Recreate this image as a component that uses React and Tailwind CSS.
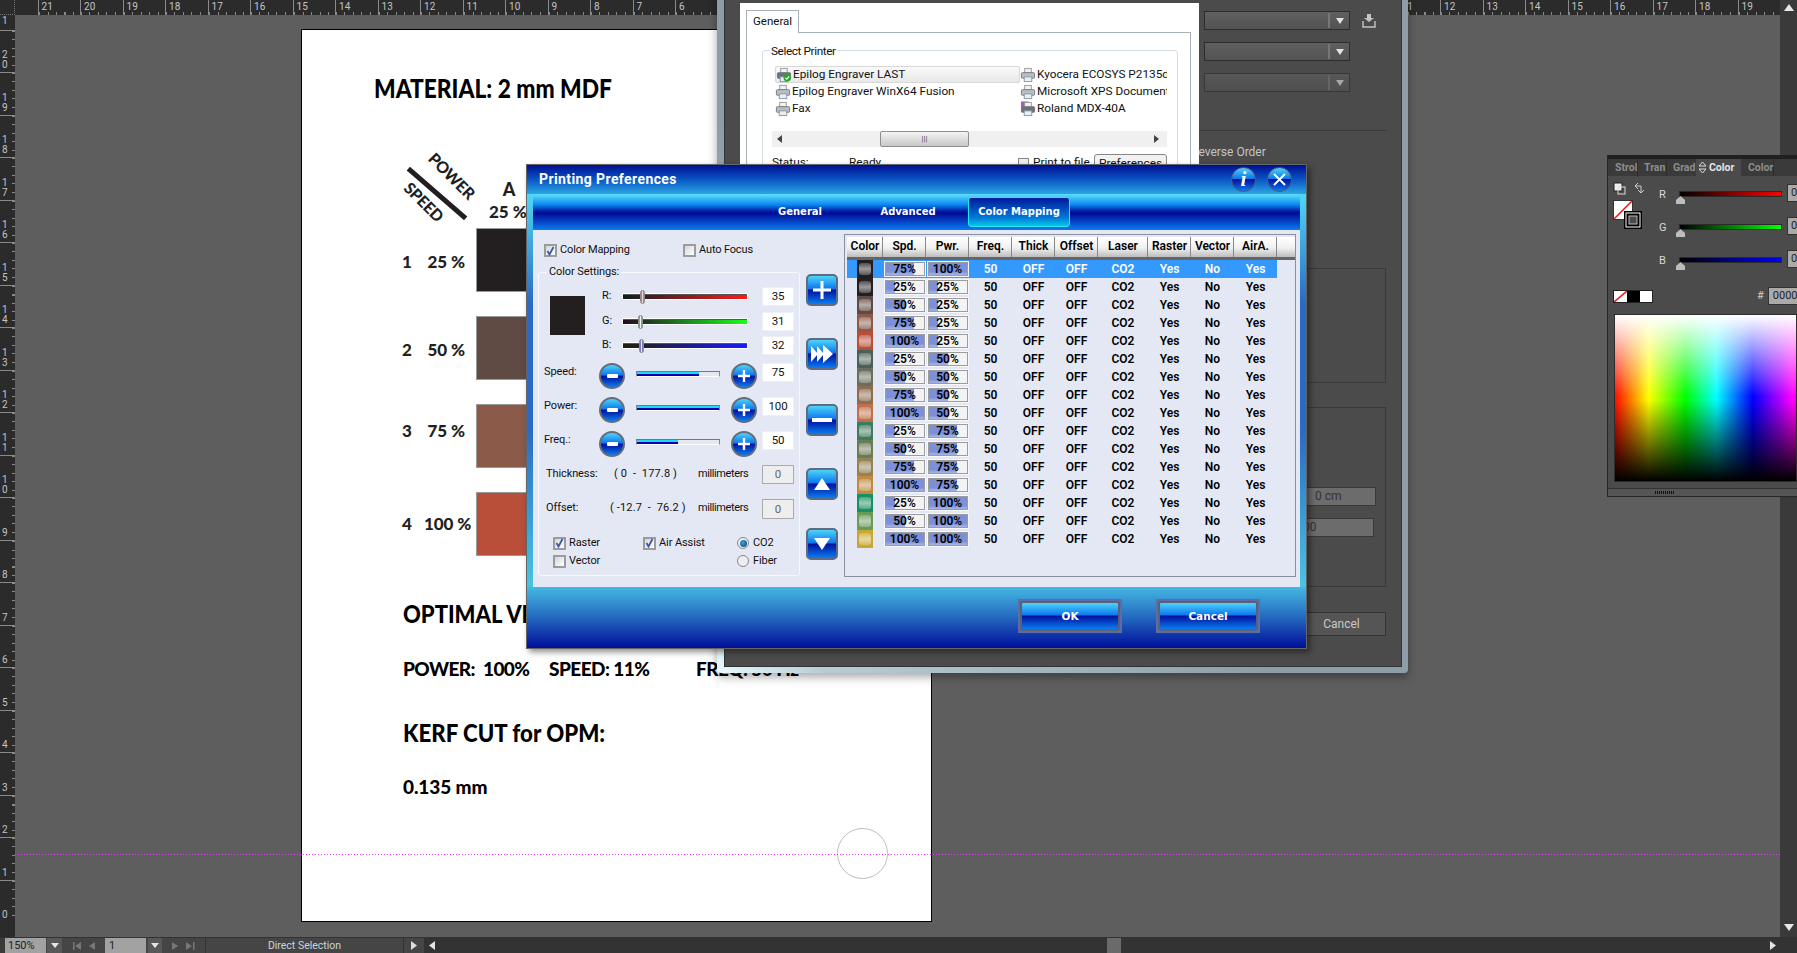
import React from "react";

const GLASS = "bg-[linear-gradient(180deg,#4fd2f8_0%,#0a78ee_46%,#00109c_50%,#0a7cf2_100%)]";
const TOPNUMS = [21,20,19,18,17,16,15,14,13,12,11,10,9,8,7,6,5,4,3,2,1,0,1,2,3,4,5,6,7,8,9,10,11,12,13,14,15,16,17,18,19];
const LEFTNUMS = [20,19,18,17,16,15,14,13,12,11,10,9,8,7,6,5,4,3,2,1,0];
const WIDTHS = ["w-[36px]","w-[43px]","w-[43px]","w-[43px]","w-[43px]","w-[43px]","w-[50px]","w-[43px]","w-[43px]","w-[43px]"];
const HEAD = ["Color","Spd.","Pwr.","Freq.","Thick","Offset","Laser","Raster","Vector","AirA."];
const ROWS = [
  ["#231f20",75,100],["#231f20",25,25],["#5f4b44",50,25],["#8b5a48",75,25],["#b94f38",100,25],
  ["#4a5f58",25,50],["#6a6e5e",50,50],["#8e6d50",75,50],["#c0704a",100,50],
  ["#3f7a5e",25,75],["#6b7b55",50,75],["#958353",75,75],["#c08a40",100,75],
  ["#1a9060",25,100],["#6a9a58",50,100],["#c8a830",100,100],
];

function TopRuler() {
  return (
    <div className="h-[15px] flex bg-[#2b2b2b] shrink-0 overflow-hidden">
      <div className="w-[15px] shrink-0 border-r border-b border-dotted border-[#777]" />
      <div className="w-[22.6px] shrink-0" />
      {TOPNUMS.map((n, i) => (
        <div key={i} className="w-[42.5px] shrink-0 h-[15px] border-l border-[#8a8a8a] pl-[3px] text-[10px] leading-[13px] text-[#c4c4c4] bg-[repeating-linear-gradient(90deg,#8a8a8a_0_1px,transparent_1px_8.5px)] bg-size-[100%_3px] bg-no-repeat bg-bottom">{n}</div>
      ))}
      <div className="w-[17px] shrink-0 bg-[#3a3a3a] flex justify-center items-center ml-auto">
        <svg width="10" height="7"><path d="M5 0L10 7H0z" fill="#e8e8e8" /></svg>
      </div>
    </div>
  );
}

function LeftRuler() {
  return (
    <div className="w-[15px] bg-[#2b2b2b] flex flex-col shrink-0 overflow-hidden text-[10px] leading-[10px] text-[#c4c4c4]">
      <div className="h-[14.5px] shrink-0 pl-[2px] leading-[12px]">1</div>
      {LEFTNUMS.map((n, i) => (
        <div key={i} className="h-[42.5px] shrink-0 border-t border-[#8a8a8a] flex flex-col justify-end pb-[2px] pl-[2px] bg-[repeating-linear-gradient(180deg,#8a8a8a_0_1px,transparent_1px_8.5px)] bg-size-[3px_100%] bg-no-repeat bg-right">
          {String(n).split("").map((d, j) => <span key={j}>{d}</span>)}
        </div>
      ))}
    </div>
  );
}

function PageDoc() {
  const big = "font-[Lato,sans-serif] font-black text-black";
  const rowOffset = ["translate-y-[2px]", "translate-y-[2px]", "-translate-y-[5px]", "translate-y-[0px]"];
  return (
    <div className={"absolute left-[286px] top-[14px] w-[631px] h-[893px] bg-white border border-black pl-[72px] " + big}>
      <div className="mt-[44px] h-[28px] text-[26px] leading-[28px] whitespace-nowrap origin-left scale-x-[0.875]">MATERIAL: 2 mm MDF</div>
      <div className="relative h-[126px] ml-[29px] text-[#231f20]">
        <div className="absolute -left-[4px] top-[89px] w-[76px] h-[5px] bg-[#231f20] rotate-[41deg]" />
        <div className="absolute left-[20px] top-[64px] text-[16px] leading-[20px] rotate-[45deg] tracking-[-0.3px]">POWER</div>
        <div className="absolute -left-[3px] top-[90px] text-[16px] leading-[20px] rotate-[45deg] tracking-[-0.3px]">SPEED</div>
        <div className="absolute left-[86px] top-[77px] w-[40px] text-center text-[18px] leading-[20px]">A</div>
        <div className="absolute left-[86px] top-[100px] text-[17px] leading-[20px] whitespace-nowrap">25 %</div>
      </div>
      {[["1","25 %","bg-[#231f20]"],["2","50 %","bg-[#5f4b44]"],["3","75 %","bg-[#8b5a48]"],["4","100 %","bg-[#b94f38]"]].map(([a,b,c],i)=>(
        <div key={i} className="flex items-center h-[64px] mb-[24px] text-[#231f20] text-[17px] tracking-[-0.1px]">
          <span className={"w-[22px] ml-[28px] shrink-0 " + rowOffset[i]}>{a}</span>
          <span className={"w-[51px] shrink-0 text-right pr-[10px] whitespace-nowrap " + rowOffset[i]}>{b}</span>
          <div className={"w-[80px] h-[64px] shrink-0 border border-[#999] ml-[1px] " + c} />
        </div>
      ))}
      <div className="ml-[29px] mt-[43px] h-[28px] text-[25px] leading-[28px] whitespace-nowrap origin-left scale-x-[0.88]">OPTIMAL VECTOR:</div>
      <div className="ml-[29px] mt-[31px] h-[22px] flex text-[19px] leading-[22px] tracking-[-0.55px] whitespace-nowrap">
        <span className="w-[146px]">POWER:&nbsp; 100%</span>
        <span className="w-[147px]">SPEED: 11%</span>
        <span>FREQ: 50 Hz</span>
      </div>
      <div className="ml-[29px] mt-[38px] h-[28px] text-[25px] leading-[28px] whitespace-nowrap origin-left scale-x-[0.89]">KERF CUT for OPM:</div>
      <div className="ml-[29px] mt-[30px] h-[22px] text-[19px] leading-[22px] tracking-[-0.1px]">0.135 mm</div>
      <div className="absolute left-[535px] top-[798px] w-[51px] h-[51px] rounded-full border border-[#bdbdbd]" />
    </div>
  );
}

function Printer({ check, purple }) {
  return (
    <svg width="16" height="16" viewBox="0 0 17 16" className="shrink-0">
      {purple && <rect x="1" y="0" width="8" height="6" fill="#9a60c0" />}
      <rect x="5" y="1" width="7" height="5" fill="#f2f2f2" stroke="#999" />
      <rect x="1.5" y="5.5" width="14" height="6" rx="1" fill={check||purple ? "#6a7278" : "#b8bec2"} stroke="#777" />
      <rect x="4.5" y="10" width="8" height="5" fill="#e8eef2" stroke="#89a" />
      {check && <><circle cx="12" cy="11" r="4" fill="#2da52d" /><path d="M10 11l1.5 1.5L14 9.5" stroke="#fff" strokeWidth="1.2" fill="none" /></>}
    </svg>
  );
}

function Combo({ dim }) {
  return (
    <div className={"h-[19px] w-[146px] ml-[5px] border border-[#2d2d2d] flex justify-end items-center bg-[linear-gradient(180deg,#606060,#525252)] " + (dim ? "opacity-60" : "")}>
      <div className="h-[15px] w-[2px] border-x border-[#777] mr-[6px]" />
      <svg width="8" height="6" className="mr-[5px]"><path d="M0 0H8L4 6z" fill="#e4e4e4" /></svg>
    </div>
  );
}

function PrintWindow() {
  const printers = [
    ["Epilog Engraver LAST", "Kyocera ECOSYS P2135dn"],
    ["Epilog Engraver WinX64 Fusion", "Microsoft XPS Document Writer"],
    ["Fax", "Roland MDX-40A"],
  ];
  return (
    <div className="absolute left-[717px] top-[-10px] w-[691px] h-[683px] pl-[7px] pr-[6px] pb-[6px] rounded-b-[4px] bg-[linear-gradient(45deg,#e8faff_0%,#b8ccd6_8%,#8d9ea8_40%)] shadow-[0_4px_10px_rgba(0,0,0,0.35)]">
      <div className="h-full bg-[#4b4b4b] flex border border-[#333] text-[12px]">
        <div className="relative z-10 w-[459px] h-[500px] ml-[15px] mt-[12px] bg-white shrink-0 pt-[7px] pl-[6px] text-[#111]">
          <div className="w-[53px] h-[23px] border border-b-0 border-[#a9b2ba] bg-white relative z-10 pl-[6px] leading-[20px] text-[11.5px]">General</div>
          <div className="w-[445px] h-[400px] border border-[#a9b2ba] -mt-[1px] pl-[15px] pt-[17px] text-[11.8px]">
            <div className="relative w-[416px] h-[200px] border border-[#d4dce4] rounded-[3px] pl-[12px] pt-[15px]">
              <div className="absolute left-[7px] -top-[7px] bg-white px-[1px] leading-[15px] tracking-[-0.4px]">Select Printer</div>
              <div className="grid grid-cols-[245px_147px]">
                {printers.map(([a,b],i)=>(
                  <React.Fragment key={i}>
                    <div className={"h-[17px] flex items-center whitespace-nowrap rounded-[2px] " + (i===0 ? "border border-[#d8d8d8] bg-[linear-gradient(180deg,#fafafa,#e8e8e8)]" : "")}>
                      <Printer check={i===0} /><span className="ml-[1px]">{a}</span>
                    </div>
                    <div className="h-[17px] flex items-center whitespace-nowrap overflow-hidden">
                      <Printer purple={i===2} /><span className="ml-[1px]">{b}</span>
                    </div>
                  </React.Fragment>
                ))}
              </div>
              <div className="-ml-[3px] mt-[14px] w-[395px] h-[16px] bg-[#f0f0f0] flex items-center">
                <svg width="16" height="8"><path d="M10 0V8L5 4z" fill="#444" /></svg>
                <div className="ml-[92px] w-[89px] h-[16px] border border-[#8e8e8e] rounded-[2px] bg-[linear-gradient(180deg,#f4f4f4,#c8c8c8)] flex items-center justify-center text-[8px] text-[#555]">|||</div>
                <svg width="8" height="8" className="ml-auto mr-[5px]"><path d="M0 0V8L5 4z" fill="#444" /></svg>
              </div>
              <div className="-ml-[3px] mt-[7px] flex items-center h-[18px]">
                <span className="w-[77px]">Status:</span>
                <span className="w-[169px]">Ready</span>
                <span className="w-[11px] h-[11px] border border-[#888] bg-[#eee] mr-[4px]" />
                <span className="w-[61px] whitespace-nowrap">Print to file</span>
                <span className="w-[73px] h-[18px] border border-[#888] rounded-[3px] bg-[#f2f2f2] text-center">Preferences</span>
              </div>
            </div>
          </div>
        </div>
        <div className="w-[203px] shrink-0 pt-[20px] text-[#c4c4c4]">
          <div className="flex items-center">
            <Combo />
            <svg width="14" height="14" viewBox="0 0 14 14" className="ml-[12px]">
              <path d="M5 0h4v4h3L7 8 2 4h3z" fill="#c4c4c4" />
              <path d="M1 7v6h12V7" fill="none" stroke="#c4c4c4" strokeWidth="1.4" />
            </svg>
          </div>
          <div className="mt-[12px]"><Combo /></div>
          <div className="mt-[12px]"><Combo dim /></div>
          <div className="mt-[38px] h-px w-[188px] bg-[#3a3a3a]" />
          <div className="mt-[14px] -ml-[8px] text-[12px] leading-[15px] whitespace-nowrap">Reverse Order</div>
          <div className="mt-[108px] w-[187px] h-[115px] border border-[#393939]" />
          <div className="mt-[24px] w-[187px] h-[180px] border border-[#393939] pt-[79px]">
            <div className="ml-[99px] w-[77px] h-[19px] bg-[#6c6c6c] border border-[#393939] text-[#333] pl-[15px] leading-[17px]">0 cm</div>
            <div className="ml-[99px] mt-[12px] w-[75px] h-[19px] bg-[#6c6c6c] border border-[#393939] text-[#333] pl-[3px] leading-[17px]">00</div>
          </div>
          <div className="mt-[25px] w-[187px] h-[24px] border border-[#333] bg-[#555] text-center pl-[98px] leading-[22px] text-[#c9c9c9]">Cancel</div>
        </div>
      </div>
    </div>
  );
}

function ColorPanel() {
  const sliders = [
    ["R","bg-[linear-gradient(90deg,#000,#ff0000)]"],
    ["G","bg-[linear-gradient(90deg,#000,#00ff00)]"],
    ["B","bg-[linear-gradient(90deg,#000,#0000ff)]"],
  ];
  return (
    <div className="absolute left-[1607px] top-[155px] w-[190px] h-[342px] bg-[#4b4b4b] border-l border-b border-[#262626] flex flex-col overflow-hidden">
      <div className="h-[4px] bg-[#202020] shrink-0" />
      <div className="h-[17px] bg-[#3a3a3a] flex text-[10.5px] leading-[17px] font-bold text-[#8d8d8d] shrink-0 whitespace-nowrap">
        <div className="w-[30px] pl-[7px] overflow-hidden border-r border-[#2c2c2c]">Strol</div>
        <div className="w-[29px] pl-[6px] overflow-hidden border-r border-[#2c2c2c]">Tran:</div>
        <div className="w-[29px] pl-[6px] overflow-hidden">Grad</div>
        <div className="w-[45px] bg-[#4b4b4b] text-[#e4e4e4] flex items-center pl-[3px]">
          <svg width="7" height="11" className="mr-[3px]"><path d="M3.5 0L7 4H0zM3.5 11L0 7H7z" fill="none" stroke="#ddd" /></svg>Color
        </div>
        <div className="w-[33px] pl-[7px] border-r border-[#2c2c2c]">Color</div>
      </div>
      <div className="flex h-[111px] shrink-0">
        <div className="relative w-[57px] pl-[5px] pt-[6px] shrink-0">
          <svg width="32" height="14" viewBox="0 0 32 14">
            <rect x="1" y="1" width="8" height="8" fill="#eee" stroke="#222" />
            <rect x="5" y="5" width="7" height="7" fill="none" stroke="#ddd" />
            <path d="M25 1l-3 3 3 3M22 4h6v6M25 8l3 3 3-3" fill="none" stroke="#ccc" />
          </svg>
          <svg width="30" height="30" viewBox="0 0 30 30" className="mt-[4px]">
            <rect x="0.5" y="0.5" width="19" height="19" fill="#fff" stroke="#333" />
            <path d="M1 19L19 1" stroke="#f01010" strokeWidth="1.5" />
            <rect x="11" y="11" width="18" height="18" fill="#000" />
            <rect x="13" y="13" width="14" height="14" fill="none" stroke="#fff" />
            <rect x="16" y="16" width="8" height="8" fill="#4b4b4b" stroke="#bbb" />
          </svg>
        </div>
        <div className="flex-1 pt-[11px]">
          {sliders.map(([l,c])=>(
            <div key={l} className="flex h-[33px] text-[11px] text-[#d8d8d8]">
              <span className="w-[20px] -ml-[6px] leading-[15px]">{l}</span>
              <div className="relative w-[103px] h-[6px] mt-[4px] border border-[#2a2a2a]">
                <div className={"h-full " + c} />
                <svg width="9" height="8" className="absolute -left-[4px] top-[4px]"><path d="M4.5 0L9 4V8H0V4z" fill="#bdbdbd" /></svg>
              </div>
              <div className="ml-[5px] w-[20px] h-[18px] -mt-[3px] bg-[#aaa] border border-[#333] text-[11px] text-[#222] pl-[3px] leading-[16px]">0</div>
            </div>
          ))}
        </div>
      </div>
      <div className="flex items-center h-[18px] pl-[5px] shrink-0">
        <div className="flex h-[13px] w-[40px] shrink-0 border border-[#222]">
          <svg width="13" height="11" className="shrink-0"><rect width="13" height="11" fill="#fff" /><path d="M0 11L13 0" stroke="#f01010" strokeWidth="1.5" /></svg>
          <div className="w-[13px] bg-black" />
          <div className="flex-1 bg-white" />
        </div>
        <span className="ml-[104px] text-[11px] text-[#cfcfcf] shrink-0">#</span>
        <div className="ml-[4px] w-[42px] h-[18px] shrink-0 bg-[#aaa] border border-[#333] text-[11px] text-[#222] pl-[4px] leading-[16px]">000000</div>
      </div>
      <div className="mt-[9px] ml-[6px] h-[168px] shrink-0 border border-[#2e2e2e] bg-[linear-gradient(90deg,#ff0000_-1%,#ffff00_18.6%,#00ff00_38.8%,#00ffff_56%,#0000ff_76%,#ff00ff_98%,#ff0000_116%)]">
        <div className="h-full bg-[linear-gradient(180deg,#ffffff_0%,rgba(255,255,255,0)_49%,rgba(0,0,0,0)_51%,#000000_100%)]" />
      </div>
      <div className="mt-[6px] flex-1 border-t border-[#333] bg-[#555] flex justify-center items-center pr-[75px]">
        <div className="w-[20px] h-[3px] bg-[repeating-linear-gradient(90deg,#111_0_1px,transparent_1px_2px)]" />
      </div>
    </div>
  );
}

function Check({ on }) {
  return (
    <span className="w-[13px] h-[13px] shrink-0 border-2 border-[#9b9b9b] bg-[linear-gradient(135deg,#d4d6da,#ffffff)] flex items-center justify-center">
      {on && <svg width="9" height="10" viewBox="0 0 9 10"><path d="M1.5 5l2 3.5L7.5 1" fill="none" stroke="#3c5aa8" strokeWidth="1.8" /></svg>}
    </span>
  );
}

function Radio({ on }) {
  return (
    <span className="w-[12px] h-[12px] shrink-0 rounded-full border border-[#888] bg-[#eceef2] flex items-center justify-center">
      {on && <span className="w-[7px] h-[7px] rounded-full bg-[radial-gradient(circle_at_40%_40%,#3aa8d8,#003a70)]" />}
    </span>
  );
}

function PlusIcon() {
  return <svg width="14" height="14"><path d="M7 1v12M1 7h12" stroke="#fff" strokeWidth="2.4" /></svg>;
}

function RoundBtn({ plus }) {
  return (
    <div className={"w-[26px] h-[26px] shrink-0 rounded-full border-2 border-[#666d78] flex items-center justify-center " + GLASS}>
      {plus ? <PlusIcon /> : <span className="w-[11px] h-[4px] bg-white rounded-[1px]" />}
    </div>
  );
}

function SideBtn({ children, cls }) {
  return (
    <div className={"w-[32px] h-[32px] rounded-[5px] border-2 border-[#5d6c80] flex items-center justify-center " + GLASS + " " + (cls || "")}>
      {children}
    </div>
  );
}

function RgbRow({ label, pos, track, thumb, value }) {
  return (
    <div className="flex items-center h-[19px] mb-[5.5px]">
      <span className="w-[21px]">{label}</span>
      <div className="relative w-[124px] h-[5px] border-t border-[#555] outline outline-white">
        <div className={"h-full " + track} />
        <span className={"absolute -top-[5px] w-[5px] h-[14px] rounded-full border border-[#888] " + thumb} style={{ left: pos }} />
      </div>
      <div className="ml-[15px] w-[32px] h-[19px] bg-white border border-[#eef0f6] text-center leading-[17px] text-[11.5px]">{value}</div>
    </div>
  );
}

function PowerRow({ label, value }) {
  return (
    <div className="flex items-start h-[26px] mb-[8px]">
      <span className="w-[55px] leading-[14px] pt-[2px]">{label}</span>
      <RoundBtn />
      <div className="ml-[11px] w-[84px] h-[6px] mt-[8px] border border-t-[#777] border-x-[#888] border-b-white bg-[#e3e8f4]">
        <div className="h-full bg-[linear-gradient(180deg,#18dcf2_50%,#0000b8_50%)]" style={{ width: value + "%" }} />
      </div>
      <div className="ml-[11px]"><RoundBtn plus /></div>
      <div className="ml-[5px] w-[32px] h-[19px] bg-white border border-[#eef0f6] text-center leading-[17px] text-[11.5px]">{value}</div>
    </div>
  );
}

function Bar({ v }) {
  return (
    <div className="relative w-[40px] h-[14px] border border-[#9c9c9c] bg-[#f3f3f3] outline outline-[#f7f8fc] text-center text-[12px] leading-[12px] font-semibold text-black">
      <div className="absolute left-0 top-0 bottom-0 bg-[linear-gradient(180deg,#7b90d6,#7b90d6_70%,#a5b6ec)]" style={{ width: v + "%" }} />
      <span className="relative">{v}%</span>
    </div>
  );
}

function Table() {
  return (
    <div className="ml-[6px] mt-[4px] w-[452px] h-[343px] border border-[#8a8f9f] pl-[2px] pt-[2px] shrink-0">
      <div className="flex h-[20px] w-[448px] border-b-[3px] border-[#666] box-content">
        {HEAD.map((h,i)=>(
          <div key={h} className={WIDTHS[i] + " h-[20px] border-r border-[#888] bg-[linear-gradient(180deg,#ffffff,#f0f0f0_55%,#bdbdbd)] text-center pl-[1px] text-[12px] leading-[19px] font-semibold text-black"}>{h}</div>
        ))}
        <div className="flex-1 h-[20px] bg-[linear-gradient(180deg,#ffffff,#f0f0f0_55%,#bdbdbd)]" />
      </div>
      {ROWS.map(([c,s,p],i)=>(
        <div key={i} className={"flex h-[18px] w-[430px] items-center text-center text-[12px] font-semibold " + (i===0 ? "bg-[#3399ff] text-white" : "text-black")}>
          <div className={WIDTHS[0] + " flex justify-center"}>
            <div className="w-[16px] h-[18px] flex items-center justify-center" style={{ background: c }}>
              <div className="w-[12px] h-[12px] rounded-[3px] bg-[linear-gradient(180deg,rgba(255,255,255,0.22),rgba(255,255,255,0.55)_50%,rgba(255,255,255,0.25))]" />
            </div>
          </div>
          <div className={WIDTHS[1] + " flex justify-center"}><Bar v={s} /></div>
          <div className={WIDTHS[2] + " flex justify-center"}><Bar v={p} /></div>
          <div className={WIDTHS[3]}>50</div>
          <div className={WIDTHS[4]}>OFF</div>
          <div className={WIDTHS[5]}>OFF</div>
          <div className={WIDTHS[6]}>CO2</div>
          <div className={WIDTHS[7]}>Yes</div>
          <div className={WIDTHS[8]}>No</div>
          <div className={WIDTHS[9]}>Yes</div>
        </div>
      ))}
    </div>
  );
}

function Dialog() {
  return (
    <div className="absolute z-20 left-[526px] top-[164px] w-[781px] h-[485px] border border-[#666] flex flex-col shadow-[3px_3px_6px_rgba(0,0,0,0.45)] font-[Roboto,sans-serif] text-[#111]">
      <div className="h-[29px] shrink-0 flex items-center pl-[12px] bg-[linear-gradient(180deg,#000e92_0%,#0a55c4_50%,#2ba6e4_100%)]">
        <span className="text-[14px] font-bold text-white tracking-[0.4px]">Printing Preferences</span>
        <div className="ml-auto flex gap-[11px] mr-[14px]">
          <div className={"w-[25px] h-[25px] rounded-full border border-[#557] flex items-center justify-center text-white italic font-bold text-[21px] font-['Liberation_Serif',serif] " + GLASS}>i</div>
          <div className={"w-[25px] h-[25px] rounded-full border border-[#557] flex items-center justify-center " + GLASS}>
            <svg width="15" height="15"><path d="M2 2l11 11M13 2L2 13" stroke="#fff" strokeWidth="2" /></svg>
          </div>
        </div>
      </div>
      <div className="h-[393px] shrink-0 flex">
        <div className="w-[6px] bg-[linear-gradient(180deg,#4fd8f5_0%,#2a6ac4_28%,#2a6ac4_60%,#4ac4e4_100%)]" />
        <div className="flex-1 flex flex-col">
          <div className="h-[36px] shrink-0 flex text-white font-['DejaVu_Sans',sans-serif] font-bold text-[10px] bg-[linear-gradient(180deg,#5de0ff_0%,#0a86f0_30%,#000f9a_50%,#000f9a_55%,#0a7cf0_100%)]">
            <div className="ml-[227px] w-[80px] text-center leading-[36px]">General</div>
            <div className="ml-[28px] w-[80px] text-center leading-[36px]">Advanced</div>
            <div className="ml-[20px] mt-[3px] w-[102px] h-[30px] rounded-[3px] border border-[#20e8f8] bg-[linear-gradient(180deg,#001a9c,#0078d8_70%,#08c8e8)] text-center leading-[28px]">Color Mapping</div>
          </div>
          <div className="h-[357px] flex bg-[#e3e8f4] text-[11px]">
            <div className="w-[262px] ml-[5px] shrink-0">
              <div className="flex items-center pl-[6px] mt-[14px] h-[13px]">
                <Check on /><span className="ml-[3px] w-[123px] tracking-[-0.15px]">Color Mapping</span>
                <Check /><span className="ml-[3px] tracking-[-0.15px]">Auto Focus</span>
              </div>
              <div className="relative mt-[15px] h-[304px] border border-[#f6f8fc] rounded-[3px] tracking-[-0.1px]">
                <span className="absolute left-[8px] -top-[8px] px-[2px] bg-[#e3e8f4] leading-[14px]">Color Settings:</span>
                <div className="flex pt-[14px] pl-[11px]">
                  <div className="w-[35px] h-[39px] mt-[9px] bg-[#231f20] shrink-0" />
                  <div className="ml-[17px]">
                    <RgbRow label="R:" pos="17px" value="35" track="bg-[linear-gradient(90deg,#0a2020,#ff1a1a)]" thumb="bg-[linear-gradient(90deg,#c05050,#f4d0d0,#c05050)]" />
                    <RgbRow label="G:" pos="15px" value="31" track="bg-[linear-gradient(90deg,#200a20,#1aff1a)]" thumb="bg-[linear-gradient(90deg,#409040,#e8f8e8,#409040)]" />
                    <RgbRow label="B:" pos="16px" value="32" track="bg-[linear-gradient(90deg,#20200a,#1a1aff)]" thumb="bg-[linear-gradient(90deg,#5050a0,#e0e0f4,#5050a0)]" />
                  </div>
                </div>
                <div className="pl-[5px] mt-[2px]">
                  <PowerRow label="Speed:" value={75} />
                  <PowerRow label="Power:" value={100} />
                  <PowerRow label="Freq.:" value={50} />
                </div>
                <div className="flex items-center h-[19px] pl-[7px]">
                  <span className="w-[68px]">Thickness:</span>
                  <span className="w-[84px] whitespace-pre tracking-[0.15px]">( 0  -  177.8 )</span>
                  <span className="w-[64px] tracking-[-0.4px]">millimeters</span>
                  <div className="w-[32px] h-[19px] bg-[#eeeeee] border border-[#aaa] text-center leading-[17px] text-[11.5px] text-[#666]">0</div>
                </div>
                <div className="flex items-center h-[20px] pl-[7px] mt-[15px]">
                  <span className="w-[64px]">Offset:</span>
                  <span className="w-[88px] whitespace-pre tracking-[0.15px]">( -12.7  -  76.2 )</span>
                  <span className="w-[64px] tracking-[-0.4px]">millimeters</span>
                  <div className="w-[32px] h-[20px] bg-[#eeeeee] border border-[#aaa] text-center leading-[18px] text-[11.5px] text-[#666]">0</div>
                </div>
                <div className="flex items-center h-[13px] pl-[14px] mt-[18px]">
                  <Check on /><span className="ml-[3px] w-[74px]">Raster</span>
                  <Check on /><span className="ml-[3px] w-[78px]">Air Assist</span>
                  <Radio on /><span className="ml-[4px]">CO2</span>
                </div>
                <div className="flex items-center h-[13px] pl-[14px] mt-[5px]">
                  <Check /><span className="ml-[3px] w-[168px]">Vector</span>
                  <Radio /><span className="ml-[4px]">Fiber</span>
                </div>
              </div>
            </div>
            <div className="w-[32px] ml-[6px] pt-[44px] shrink-0">
              <SideBtn><svg width="22" height="22"><path d="M11 2v18M2 11h18" stroke="#fff" strokeWidth="3" /></svg></SideBtn>
              <SideBtn cls="mt-[32px]"><svg width="24" height="20" viewBox="0 0 24 20"><path d="M1 2l7 8-7 8zM7 2l7 8-7 8zM13 1l10 9-10 9z" fill="#fff" /></svg></SideBtn>
              <SideBtn cls="mt-[34px]"><span className="w-[20px] h-[4px] bg-white" /></SideBtn>
              <SideBtn cls="mt-[32px]"><svg width="16" height="12"><path d="M8 0l8 12H0z" fill="#fff" /></svg></SideBtn>
              <SideBtn cls="mt-[28px]"><svg width="16" height="12"><path d="M0 0h16L8 12z" fill="#fff" /></svg></SideBtn>
            </div>
            <Table />
          </div>
        </div>
        <div className="w-[6px] bg-[linear-gradient(180deg,#4fd8f5_0%,#2a6ac4_28%,#2a6ac4_60%,#4ac4e4_100%)]" />
      </div>
      <div className="flex-1 flex pl-[491px] pt-[12px] bg-[linear-gradient(180deg,#45b8e2_0%,#2468c0_50%,#000f9a_100%)] text-white font-['DejaVu_Sans',sans-serif] font-bold text-[10.5px]">
        {["OK","Cancel"].map((t,i)=>(
          <div key={t} className={"w-[104px] h-[34px] p-[2px] bg-[#5c6ca8] " + (i ? "ml-[34px]" : "")}>
            <div className={"w-full h-full rounded-[3px] border-2 border-[#5a6078] text-center leading-[26px] " + GLASS}>{t}</div>
          </div>
        ))}
      </div>
    </div>
  );
}

function StatusBar() {
  return (
    <div className="h-[16px] shrink-0 flex items-center bg-[#454545] text-[11px] font-[Roboto,sans-serif] border-t border-[#333]">
      <div className="w-[5px] h-full bg-[#3a3a3a]" />
      <div className="w-[41px] h-full bg-[#a2a2a2] text-[#222] pl-[3px] leading-[16px]">150%</div>
      <div className="w-[15px] h-full ml-[1px] bg-[#585858] flex items-center justify-center"><svg width="8" height="5"><path d="M0 0h8L4 5z" fill="#e4e4e4" /></svg></div>
      <div className="w-[43px] flex items-center justify-around px-[7px]">
        <svg width="9" height="8"><path d="M0 0h1.5v8H0zM8 0v8L2 4z" fill="#777" /></svg>
        <svg width="6" height="8"><path d="M6 0v8L0 4z" fill="#777" /></svg>
      </div>
      <div className="w-[41px] h-full bg-[#a2a2a2] text-[#222] pl-[4px] leading-[16px]">1</div>
      <div className="w-[14px] h-full ml-[2px] bg-[#585858] flex items-center justify-center"><svg width="8" height="5"><path d="M0 0h8L4 5z" fill="#e4e4e4" /></svg></div>
      <div className="w-[43px] flex items-center justify-around px-[6px]">
        <svg width="6" height="8"><path d="M0 0v8l6-4z" fill="#777" /></svg>
        <svg width="9" height="8"><path d="M0 0v8l6-4zM7 0h1.5v8H7z" fill="#777" /></svg>
      </div>
      <div className="w-[199px] h-full border-x border-[#333] text-center text-[#c9d4dc] leading-[16px] text-[10.5px]">Direct Selection</div>
      <div className="w-[20px] flex justify-center"><svg width="6" height="9"><path d="M0 0v9l6-4.5z" fill="#ddd" /></svg></div>
      <div className="flex-1 h-full bg-[#333] flex items-center pl-[5px]">
        <svg width="6" height="9"><path d="M6 0v9L0 4.5z" fill="#e4e4e4" /></svg>
        <div className="ml-[672px] w-[14px] h-full bg-[#6a6a6a]" />
        <svg width="6" height="9" className="ml-auto mr-[21px]"><path d="M0 0v9l6-4.5z" fill="#e4e4e4" /></svg>
      </div>
    </div>
  );
}

export default function App() {
  return (
    <div className="relative w-[1797px] h-[953px] overflow-hidden flex flex-col bg-[#5e5e5e] font-[Roboto,sans-serif]">
      <TopRuler />
      <div className="flex h-[922px] shrink-0">
        <LeftRuler />
        <div className="relative flex-1 bg-[#5e5e5e]">
          <PageDoc />
          <div className="absolute left-0 right-0 top-[839px] h-px bg-[repeating-linear-gradient(90deg,#e040fb_0_1px,transparent_1px_3px)]" />
        </div>
        <div className="w-[17px] shrink-0 bg-[#3a3a3a] flex items-end justify-center pb-[6px]">
          <svg width="10" height="7"><path d="M0 0H10L5 7z" fill="#e8e8e8" /></svg>
        </div>
      </div>
      <StatusBar />
      <PrintWindow />
      <ColorPanel />
      <Dialog />
    </div>
  );
}
